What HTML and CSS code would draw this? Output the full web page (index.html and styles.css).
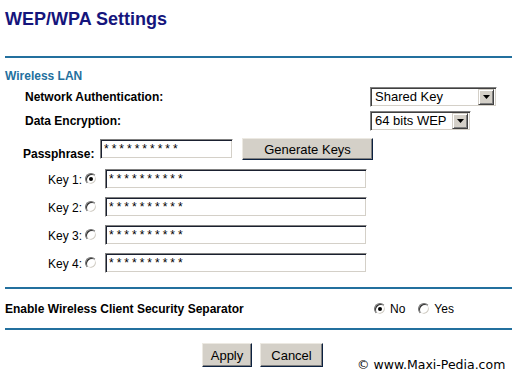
FILE: index.html
```html
<!DOCTYPE html>
<html>
<head>
<meta charset="utf-8">
<title>WEP/WPA Settings</title>
<link rel="stylesheet" href="styles.css">
</head>
<body>
<div class="page">
  <h1 class="title">WEP/WPA Settings</h1>
  <div class="rule rule-top"></div>
  <div class="section-title">Wireless LAN</div>

  <div class="field-row row-auth">
    <span class="field-label">Network Authentication:</span>
    <div class="select select-auth">
      <span class="select-text">Shared Key</span>
      <span class="select-btn"><svg width="7" height="4" viewBox="0 0 7 4"><path d="M0 0h7L3.5 4z" fill="#000"/></svg></span>
    </div>
  </div>

  <div class="field-row row-enc">
    <span class="field-label">Data Encryption:</span>
    <div class="select select-enc">
      <span class="select-text">64 bits WEP</span>
      <span class="select-btn"><svg width="7" height="4" viewBox="0 0 7 4"><path d="M0 0h7L3.5 4z" fill="#000"/></svg></span>
    </div>
  </div>

  <div class="pass-row">
    <span class="pass-label">Passphrase:</span>
    <input class="text-input pass-input" type="text" value="**********" readonly>
    <button class="btn btn-generate" type="button">Generate Keys</button>
  </div>

  <div class="key-row key-first">
    <span class="key-label">Key 1:</span>
    <span class="radio checked"></span>
    <input class="text-input key-input" type="text" value="**********" readonly>
  </div>
  <div class="key-row">
    <span class="key-label">Key 2:</span>
    <span class="radio"></span>
    <input class="text-input key-input" type="text" value="**********" readonly>
  </div>
  <div class="key-row">
    <span class="key-label">Key 3:</span>
    <span class="radio"></span>
    <input class="text-input key-input" type="text" value="**********" readonly>
  </div>
  <div class="key-row">
    <span class="key-label">Key 4:</span>
    <span class="radio"></span>
    <input class="text-input key-input" type="text" value="**********" readonly>
  </div>

  <div class="rule rule-mid"></div>
  <div class="sep-row">
    <span class="sep-label">Enable Wireless Client Security Separator</span>
    <span class="radio checked"></span><span class="opt">No</span>
    <span class="radio radio-yes"></span><span class="opt">Yes</span>
  </div>
  <div class="rule"></div>

  <div class="actions">
    <button class="btn btn-apply" type="button">Apply</button>
    <button class="btn btn-cancel" type="button">Cancel</button>
    <span class="copyright">© www.Maxi-Pedia.com</span>
  </div>
</div>
</body>
</html>
```
FILE: styles.css
```css
html, body {
  margin: 0;
  padding: 0;
  background: #fff;
}
body {
  font-family: "Liberation Sans", Arial, sans-serif;
  font-size: 12px;
  color: #000;
}
.page {
  padding-left: 5px;
}
.title {
  margin: 8px 0 0;
  font-size: 18px;
  line-height: 22px;
  height: 22px;
  font-weight: bold;
  color: #15157c;
}
.rule {
  height: 2px;
  background: #23709e;
}
.rule-top {
  margin-top: 26px;
}
.section-title {
  margin-top: 11px;
  font-weight: bold;
  font-size: 12px;
  line-height: 14px;
  color: #23709e;
}

/* label + select rows */
.field-row {
  display: flex;
  align-items: center;
  padding-left: 20px;
  height: 20px;
}
.row-auth { margin-top: 4px; }
.row-enc { margin-top: 4px; }
.field-label {
  width: 345px;
  font-weight: bold;
  line-height: 14px;
}
.select {
  box-sizing: border-box;
  height: 20px;
  display: flex;
  align-items: center;
  justify-content: space-between;
  border: 1px solid;
  border-color: #808080 #fff #fff #808080;
  box-shadow: inset 1px 1px 0 #404040, inset -1px -1px 0 #d4d0c8;
  background: #fff;
  padding: 0 2px 0 4px;
}
.select-auth { width: 127px; }
.select-enc { width: 101px; }
.select-text {
  font-size: 13px;
  line-height: 16px;
}
.select-btn {
  box-sizing: border-box;
  width: 16px;
  height: 16px;
  background: #d4d0c8;
  border: 1px solid;
  border-color: #d4d0c8 #404040 #404040 #d4d0c8;
  box-shadow: inset 1px 1px 0 #fff, inset -1px -1px 0 #808080;
  display: flex;
  align-items: center;
  justify-content: center;
}
.select-btn svg { display: block; }

/* text inputs */
.text-input {
  box-sizing: border-box;
  height: 20px;
  margin: 0;
  padding: 0 3px;
  border: 1px solid;
  border-color: #808080 #fff #fff #808080;
  box-shadow: inset 1px 1px 0 #1a2030, inset -1px -1px 0 #d4d0c8;
  background: #fff;
  font-family: "Liberation Sans", Arial, sans-serif;
  font-size: 12px;
  letter-spacing: 3px;
  color: #000;
  outline: none;
}

/* passphrase row */
.pass-row {
  display: flex;
  align-items: flex-start;
  margin-top: 7px;
  padding-left: 18px;
  height: 22px;
}
.pass-label {
  width: 77px;
  font-weight: bold;
  line-height: 14px;
  margin-top: 9px;
}
.pass-input {
  width: 133px;
  margin-top: 1px;
}

/* buttons */
.btn {
  box-sizing: border-box;
  margin: 0;
  padding: 0;
  background: #d4d0c8;
  border: 1px solid;
  border-color: #ece9e2 #0c2140 #0c2140 #ece9e2;
  box-shadow: inset -1px -1px 0 #808080;
  font-family: "Liberation Sans", Arial, sans-serif;
  font-size: 13px;
  color: #000;
  text-align: center;
}
.btn-generate {
  width: 131px;
  height: 22px;
  margin-left: 9px;
}

/* key rows */
.key-row {
  display: flex;
  align-items: flex-start;
  height: 20px;
  margin-top: 8px;
  padding-left: 43px;
}
.key-first { margin-top: 9px; }
.key-label {
  width: 37px;
  line-height: 14px;
  margin-top: 4px;
}
.key-row .radio {
  margin-top: 4px;
}
.key-input {
  width: 262px;
  margin-left: 8px;
}

/* radio */
.radio {
  box-sizing: border-box;
  flex: none;
  width: 12px;
  height: 12px;
  border-radius: 50%;
  border: 1px solid;
  border-color: #707070 #fff #fff #707070;
  box-shadow: inset 1px 1px 0 #303030, inset -1px -1px 0 #d4d0c8;
  background: #fff;
  display: flex;
  align-items: center;
  justify-content: center;
}
.radio.checked::after {
  content: "";
  width: 4px;
  height: 4px;
  border-radius: 50%;
  background: #000;
}

.rule-mid {
  margin-top: 14px;
}

/* separator row */
.sep-row {
  display: flex;
  align-items: center;
  height: 14px;
  padding: 13px 0 12px;
  line-height: 14px;
}
.sep-label {
  width: 369px;
  font-weight: bold;
}
.opt {
  margin-left: 4px;
}
.radio-yes {
  margin-left: 13px;
}

/* actions */
.actions {
  display: flex;
  align-items: flex-start;
  padding-left: 197px;
  margin-top: 13px;
}
.btn-apply {
  width: 50px;
  height: 24px;
}
.btn-cancel {
  width: 63px;
  height: 24px;
  margin-left: 8px;
}
.copyright {
  margin-left: 34px;
  margin-top: 15px;
  font-family: "DejaVu Sans", Verdana, sans-serif;
  font-size: 12.5px;
  line-height: 14px;
  white-space: nowrap;
}
```
